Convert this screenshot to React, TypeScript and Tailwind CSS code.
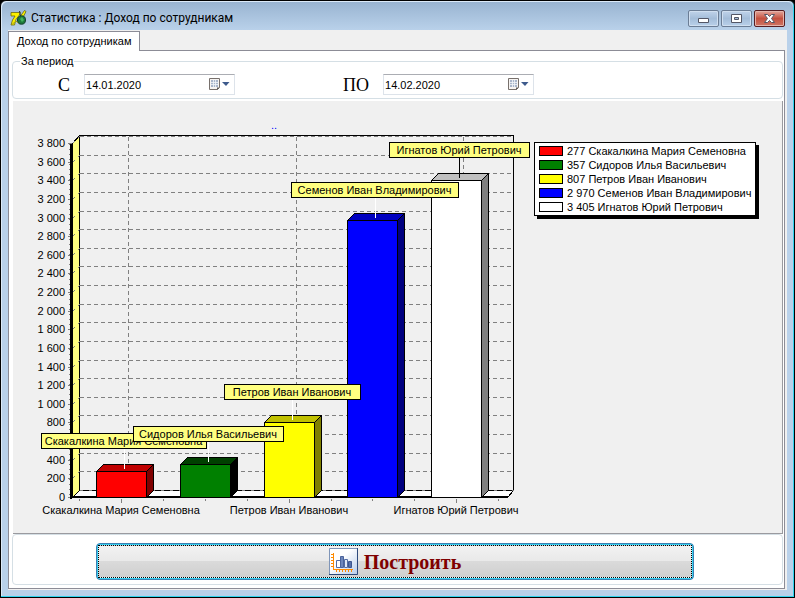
import { useState } from "react";

type Employee = {
  name: string;
  value: number;
  x: number;
  markX: number;
  markWidth: number;
  fill: string;
  top: string;
  side: string;
  line: string;
};

const employees: Employee[] = [
  { name: "Скакалкина Мария Семеновна", value: 277, x: 83, markX: 28, markWidth: 165, fill: "#ff0000", top: "#c00000", side: "#800000", line: "#fff" },
  { name: "Сидоров Илья Васильевич", value: 357, x: 167, markX: 120, markWidth: 150, fill: "#008000", top: "#004000", side: "#000000", line: "#fff" },
  { name: "Петров Иван Иванович", value: 807, x: 251, markX: 211, markWidth: 136, fill: "#ffff00", top: "#c0c000", side: "#808000", line: "#fff" },
  { name: "Семенов Иван Владимирович", value: 2970, x: 334, markX: 278, markWidth: 167, fill: "#0000ff", top: "#0000c0", side: "#000080", line: "#fff" },
  { name: "Игнатов Юрий Петрович", value: 3405, x: 418, markX: 376, markWidth: 140, fill: "#ffffff", top: "#c0c0c0", side: "#808080", line: "#000" },
];

const MAX = 3800;
const BASE = 396;
const PLOT_HEIGHT = 354;
const DEPTH = 7;
const BAR_WIDTH = 50;

const steps = Array.from({ length: 20 }, (_, i) => i * 200);
const xTicks = [66, 108, 150, 192, 234, 276, 318, 359, 401, 443, 485];

const yOf = (value: number) =>
  Math.round(BASE - (value / MAX) * PLOT_HEIGHT);

const formatNumber = (n: number) =>
  String(n).replace(/\B(?=(\d{3})+$)/g, " ");

const AppIcon = () => (
  <svg width="17" height="16" viewBox="0 0 17 16" aria-hidden="true">
    <path d="M1 2.500h9.500L9 5.500l-3 4L4.500 15H1l1.500-5L5 6H1z" fill="#fbf000" stroke="#6b6a10" strokeWidth="0.8" />
    <path d="M9 8l5.500-7.500 1.500 1-3.500 7z" fill="#fbf000" stroke="#55540c" strokeWidth="0.7" />
    <path d="M9.500 1l1 5" stroke="#333" />
    <ellipse cx="11.500" cy="10" rx="4" ry="4.200" fill="#1d7a3a" stroke="#143d2a" />
    <path d="M10 9l2-2 2 3-2 2z" fill="#43b35f" />
    <path d="M2 14.500l4-3.500 2 2" stroke="#a5a21c" fill="none" />
  </svg>
);

const CalendarIcon = () => (
  <svg width="22" height="13" viewBox="0 0 22 13" aria-hidden="true">
    <path d="M1.500.5h10v9l-2 2h-8z" fill="#f7f4f2" stroke="#77706c" />
    <path d="M3 2h7v7H3z" fill="#a9b6cb" />
    <path d="M3 4.500h7M3 6.500h7M5.500 2v7M7.500 2v7" stroke="#f3f5f9" strokeWidth="0.8" />
    <path d="M9 12V9.500h3z" fill="#5f5a58" />
    <path d="M14 4h7.500L18 8z" fill="#3d5a8c" />
  </svg>
);

const ChartIcon = () => (
  <svg width="29" height="27" viewBox="0 0 29 27" aria-hidden="true">
    <defs>
      <linearGradient id="tile" x1="0" y1="0" x2="1" y2="1">
        <stop offset="0.4" stopColor="#fff" />
        <stop offset="1" stopColor="#b5cbea" />
      </linearGradient>
    </defs>
    <path d="M.5.5h28v26H.5z" fill="url(#tile)" stroke="#7f95b8" />
    <path d="M28.500 0v26.500H0" fill="none" stroke="#2f4b7c" />
    <path d="M4.500 5v16.500M2 6.500h2M2 9.500h2M2 12.500h2M2 15.500h2M2 18.500h2M4 21.500h20M7.500 22v2M10.500 22v2M13.500 22v2M16.500 22v2M19.500 22v2M22.500 22v2" stroke="#ff8a00" fill="none" />
    <path d="M7.500 12.500h4v7h-4z" fill="#fff" stroke="#536ca2" />
    <path d="M11.500 8.500h3v11h-3z" fill="#6d86bb" stroke="#4a639b" />
    <path d="M15.500 11.500h3v8h-3z" fill="#dfe7f5" stroke="#536ca2" />
    <path d="M19.500 13.500h3v6h-3z" fill="#5570aa" stroke="#3d568f" />
  </svg>
);

const WindowButton = ({ kind, label }: { kind: "min" | "max" | "close"; label: string }) => (
  <button
    type="button"
    aria-label={label}
    className={
      kind === "close"
        ? "flex h-[17px] w-[31px] items-center justify-center rounded-xs border border-[#571d22] bg-linear-to-b from-[#e2a59b] via-[#c4503f] to-[#cf7565] shadow-[inset_0_0_0_1px_#e5b3aa]"
        : "flex h-[17px] w-[31px] items-center justify-center rounded-xs border border-[#6b7d95] bg-linear-to-b from-[#c0d3ea] via-[#a4bdd9] to-[#b9d0ea] shadow-[inset_0_0_0_1px_#d0dff0]"
    }
  >
    <svg width="13" height="11" viewBox="0 0 13 11" aria-hidden="true">
      {kind === "min" && <path d="M1.500 5.500h10v4h-10z" fill="#fff" stroke="#535666" />}
      {kind === "max" && (
        <>
          <path d="M1.500 1.500h10v8h-10z" fill="#fff" stroke="#535666" />
          <path d="M4.500 4.500h4v2h-4z" fill="#a4bdd9" stroke="#535666" />
        </>
      )}
      {kind === "close" && (
        <path d="M1.500 1.500h3l2 2 2-2h3L8.500 5.500l3 4h-3l-2-2-2 2h-3l3-4z" fill="#fff" stroke="#535666" />
      )}
    </svg>
  </button>
);

const DateField = ({
  id,
  label,
  value,
  onChange,
}: {
  id: string;
  label: string;
  value: string;
  onChange: (v: string) => void;
}) => (
  <div className="flex items-center gap-3.5">
    <label htmlFor={id} className="font-['Liberation_Serif',serif] text-lg leading-5">
      {label}
    </label>
    <div className="flex h-[21px] w-[151px] items-center border border-[#dde3ea] border-t-[#abadb3] bg-white pr-1">
      <input
        id={id}
        type="text"
        value={value}
        onChange={(e) => onChange(e.target.value)}
        className="min-w-0 flex-1 pl-px text-[11px] leading-4 outline-none"
      />
      <button type="button" aria-label="Открыть календарь">
        <CalendarIcon />
      </button>
    </div>
  </div>
);

const IncomeChart = () => (
  <svg
    width="521"
    height="432"
    viewBox="0 0 521 432"
    role="img"
    aria-label="Доход по сотрудникам"
    className="shrink-0"
    fontSize="11"
  >
    <g transform="translate(0.5 0.5)" shapeRendering="crispEdges" fill="none">
      {/* walls and floor */}
      <path d="M59 42l7-8v355l-7 7z" fill="#ffff80" stroke="#000" />
      <path d="M59 396l7-7h434l-6 7z" fill="#fff" stroke="#000" />
      <path d="M66 34h434v355" stroke="#000" />
      <path d="M66 389h434" stroke="#808080" strokeDasharray="3 6" />
      {steps.map((v) => (
        <g key={v} stroke="#808080">
          <path d={`M54 ${yOf(v)}h4`} />
          {v > 0 && (
            <>
              <path d={`M59 ${yOf(v)}l2 -2M64 ${yOf(v) - 5}l2 -2`} />
              <path d={`M66 ${yOf(v) - DEPTH}h434`} strokeDasharray="4 3" />
            </>
          )}
        </g>
      ))}
      {[115, 283, 450].map((x) => (
        <path key={x} d={`M${x} 35v354`} stroke="#808080" strokeDasharray="4 3" />
      ))}
      <path d="M56 42v354" stroke="#808080" strokeDasharray="1 4" />
      <path d="M57 42v355M58 42v355M57 395h438M57 396h437" stroke="#000" />
      {xTicks.map((x, i) => (
        <path key={x} d={`M${x} 397v${i % 4 === 1 ? 4 : 2}`} stroke="#808080" />
      ))}

      {employees.map((e) => {
        const y = yOf(e.value);
        return (
          <g key={e.name} stroke="#000">
            <path d={`M${e.x} ${y}l7 -7h${BAR_WIDTH}l-7 7z`} fill={e.top} />
            <path d={`M${e.x + BAR_WIDTH} ${y}l7 -7V${BASE - DEPTH}l-7 7z`} fill={e.side} />
            <path d={`M${e.x} ${y}h${BAR_WIDTH}V${BASE}h-${BAR_WIDTH}z`} fill={e.fill} />
          </g>
        );
      })}
    </g>

    {employees.map((e) => {
      const y = yOf(e.value) - 38;
      return (
        <g key={e.name}>
          <g transform="translate(0.5 0.5)" shapeRendering="crispEdges">
            <path d={`M${e.x + 28} ${y + 15}v20`} stroke={e.line} />
            <rect x={e.markX} y={y} width={e.markWidth} height="15" fill="#ffff80" stroke="#000" />
          </g>
          <text x={e.markX + e.markWidth / 2} y={y + 12} textAnchor="middle">
            {e.name}
          </text>
        </g>
      );
    })}

    <text x="261" y="28" textAnchor="middle" fill="#0000ff">
      ..
    </text>
    {steps
      .filter((v) => v !== 600)
      .map((v) => (
        <text key={v} x="52" y={yOf(v) + 4} textAnchor="end">
          {formatNumber(v)}
        </text>
      ))}
    {[0, 2, 4].map((i) => (
      <text key={i} x={employees[i].x + 25} y="413" textAnchor="middle">
        {employees[i].name}
      </text>
    ))}
  </svg>
);

const Legend = () => (
  <ul className="mt-[41px] shrink-0 self-start border border-black bg-white py-px pr-1 pl-1 shadow-[3px_3px_0_#000]">
    {employees.map((e) => (
      <li key={e.name} className="flex h-3.5 items-center gap-1 whitespace-nowrap">
        <span className="h-2.5 w-6 border border-black" style={{ backgroundColor: e.fill }} />
        {formatNumber(e.value)} {e.name}
      </li>
    ))}
  </ul>
);

export default function App() {
  const [from, setFrom] = useState("14.01.2020");
  const [to, setTo] = useState("14.02.2020");

  return (
    <div className="min-h-screen bg-black font-['Liberation_Sans',Arial,sans-serif] text-[11px] leading-[13px] text-black">
      <div className="flex min-h-screen flex-col rounded-t-md border border-black bg-[#b9d1ea] px-[7px] pb-[7px] shadow-[inset_-1px_-1px_0_#2fd3ee,inset_1px_1px_0_#dceaf8]">
        <header className="-mx-[6px] mt-px flex h-7 items-center rounded-t-md bg-linear-to-b from-[#99b4d1] to-[#b9d1ea] pt-1 pr-2 pl-2">
          <AppIcon />
          <h1 className="ml-1 font-[Roboto,'Noto_Sans',sans-serif] text-xs">
            Статистика : Доход по сотрудникам
          </h1>
          <div className="ml-auto flex gap-0.5">
            <WindowButton kind="min" label="Свернуть" />
            <WindowButton kind="max" label="Развернуть" />
            <WindowButton kind="close" label="Закрыть" />
          </div>
        </header>

        <main className="flex flex-1 flex-col bg-[#f0f0f0]">
          <div role="tablist" className="flex h-5 pt-px">
            <button
              type="button"
              role="tab"
              aria-selected="true"
              className="z-10 -mb-px border border-b-0 border-[#8c8c96] bg-white px-2"
            >
              Доход по сотрудникам
            </button>
          </div>

          <div role="tabpanel" className="mr-0.5 mb-px flex flex-1 flex-col border border-[#8c8c96] bg-white pt-1 pr-px pb-[3px] pl-[3px]">
            <fieldset className="flex h-[44px] rounded-sm border border-[#d5dfe5] pl-[45px]">
              <legend className="-ml-[38px] px-px">За период</legend>
              <div className="flex items-start gap-[108px] pt-1.5">
                <DateField id="date-from" label="С" value={from} onChange={setFrom} />
                <DateField id="date-to" label="ПО" value={to} onChange={setTo} />
              </div>
            </fieldset>

            <section className="mt-0.5 ml-px flex flex-1 border-r border-b border-[#9a9a9f] bg-[#f0f0f0]">
              <IncomeChart />
              <Legend />
            </section>

            <div className="rounded-sm border border-[#d5dfe5] pt-2 pr-[88px] pb-1 pl-[83px]">
              <button
                type="button"
                className="flex h-[37px] w-full rounded-sm border border-[#3c7fb1] bg-[#35d0f2] p-px"
              >
                <span className="flex h-full w-full items-center justify-center gap-1.5 border border-dotted border-black bg-[linear-gradient(#f2f2f2,#e9e9e9_48%,#dadada_50%,#cfcfcf)] font-['Liberation_Serif',serif] text-xl leading-6 font-bold text-[#800000]">
                  <ChartIcon />
                  Построить
                </span>
              </button>
            </div>
          </div>
        </main>
      </div>
    </div>
  );
}
